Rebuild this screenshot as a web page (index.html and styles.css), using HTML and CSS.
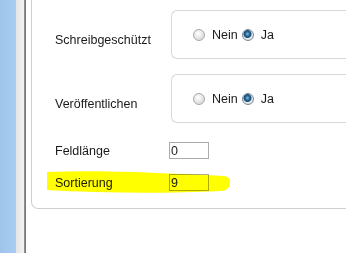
FILE: index.html
```html
<!DOCTYPE html>
<html lang="de">
  <head>
    <meta charset="UTF-8" />
    <meta name="viewport" content="width=device-width, initial-scale=1.0" />
    <title>Feldeigenschaften</title>
    <link rel="stylesheet" href="styles.css">
  </head>
  <body>
    <div class="sidebar"></div>
    <div class="gutter"></div>
    <div class="divider"></div>
    <div class="main">
      <div class="panel">
        <div class="row">
          <label class="field-label field-label-low">Schreibgeschützt</label>
          <div class="choice-box">
            <input type="radio" name="readonly" id="ro-no" />
            <label for="ro-no" class="choice-text">Nein</label>
            <input type="radio" name="readonly" id="ro-yes" checked />
            <label for="ro-yes" class="choice-text">Ja</label>
          </div>
        </div>
        <div class="row">
          <label class="field-label field-label-low">Veröffentlichen</label>
          <div class="choice-box">
            <input type="radio" name="publish" id="pub-no" />
            <label for="pub-no" class="choice-text">Nein</label>
            <input type="radio" name="publish" id="pub-yes" checked />
            <label for="pub-yes" class="choice-text">Ja</label>
          </div>
        </div>
        <div class="row row-first-input">
          <label class="field-label field-label-short" for="length">Feldlänge</label>
          <input type="text" id="length" class="small-input" value="0" />
        </div>
        <div class="row">
          <label class="field-label field-label-short" for="sort">Sortierung</label>
          <input type="text" id="sort" class="small-input" value="9" />
        </div>
      </div>
    </div>

    <!-- highlighter stroke over the "Sortierung" row -->
    <svg class="highlight" width="346" height="253" viewBox="0 0 346 253">
      <path d="M47,172 C100,170 160,173 224,176 Q231,177 230,183 Q229,191 221,191 C160,194 100,193 47,190 Z" fill="#ffff00" />
    </svg>
  </body>
</html>
```

FILE: styles.css
```css
body {
  margin: 0;
  height: 253px;
  display: flex;
  overflow: hidden;
  font-family: "Liberation Sans", Arial, sans-serif;
  font-size: 12.5px;
  color: #1a1a1a;
  background-color: #fff;
}
.sidebar {
  width: 16px;
  flex-shrink: 0;
  background: linear-gradient(to right, #9fc4ec, #a9cdf1);
}
.gutter {
  width: 8px;
  flex-shrink: 0;
  background: linear-gradient(to right, #e4e4e4, #f3f3f3);
}
.divider {
  width: 2px;
  flex-shrink: 0;
  background: linear-gradient(to right, #9a9a9a, #6e6e6e);
}
.main {
  flex: 1;
  min-width: 0;
  padding-left: 5px;
}
/* the panel continues past the right edge of the window */
.panel {
  border: 1px solid #cfcfcf;
  border-top: none;
  border-right: none;
  border-radius: 0 0 0 7px;
  padding: 10px 0 17px 23px;
  display: flex;
  flex-direction: column;
  gap: 15px;
}
.row {
  display: flex;
  align-items: center;
}
.row-first-input {
  margin-top: 4px;
}
.field-label {
  width: 116px;
  flex-shrink: 0;
}
.field-label-low {
  margin-top: 11px;
}
.field-label-short {
  width: 114px;
}
.choice-box {
  flex: 1;
  height: 47px;
  display: flex;
  align-items: center;
  padding-left: 21px;
  border: 1px solid #d8d8d8;
  border-right: none;
  border-radius: 6px 0 0 6px;
}
/* radio buttons drawn in the old XP style */
.choice-box input[type="radio"] {
  appearance: none;
  -webkit-appearance: none;
  width: 12px;
  height: 12px;
  margin: 0 0 0 4px;
  border: 1px solid #a8a8a8;
  border-radius: 50%;
  background: radial-gradient(circle at 40% 35%, #ffffff, #e2e2e2 60%, #cfcfcf);
}
.choice-box input[type="radio"]:first-child {
  margin-left: 0;
}
.choice-box input[type="radio"]:checked {
  border-color: #7a8a99;
  background: radial-gradient(circle at 45% 40%, #8fc4e6 0, #2a6c9c 2px, #1b4a6e 3.5px, #e9eef2 4.5px, #d6dde3 6px);
}
.choice-text {
  margin-left: 7px;
}
.small-input {
  width: 36px;
  height: 15px;
  padding: 0 1px;
  margin: 0;
  border: 1px solid #ababab;
  background: transparent;
  font-family: "Liberation Sans", Arial, sans-serif;
  font-size: 12.5px;
  color: #1a1a1a;
}
.highlight {
  position: absolute;
  left: 0;
  top: 0;
  pointer-events: none;
  mix-blend-mode: multiply;
}
```
